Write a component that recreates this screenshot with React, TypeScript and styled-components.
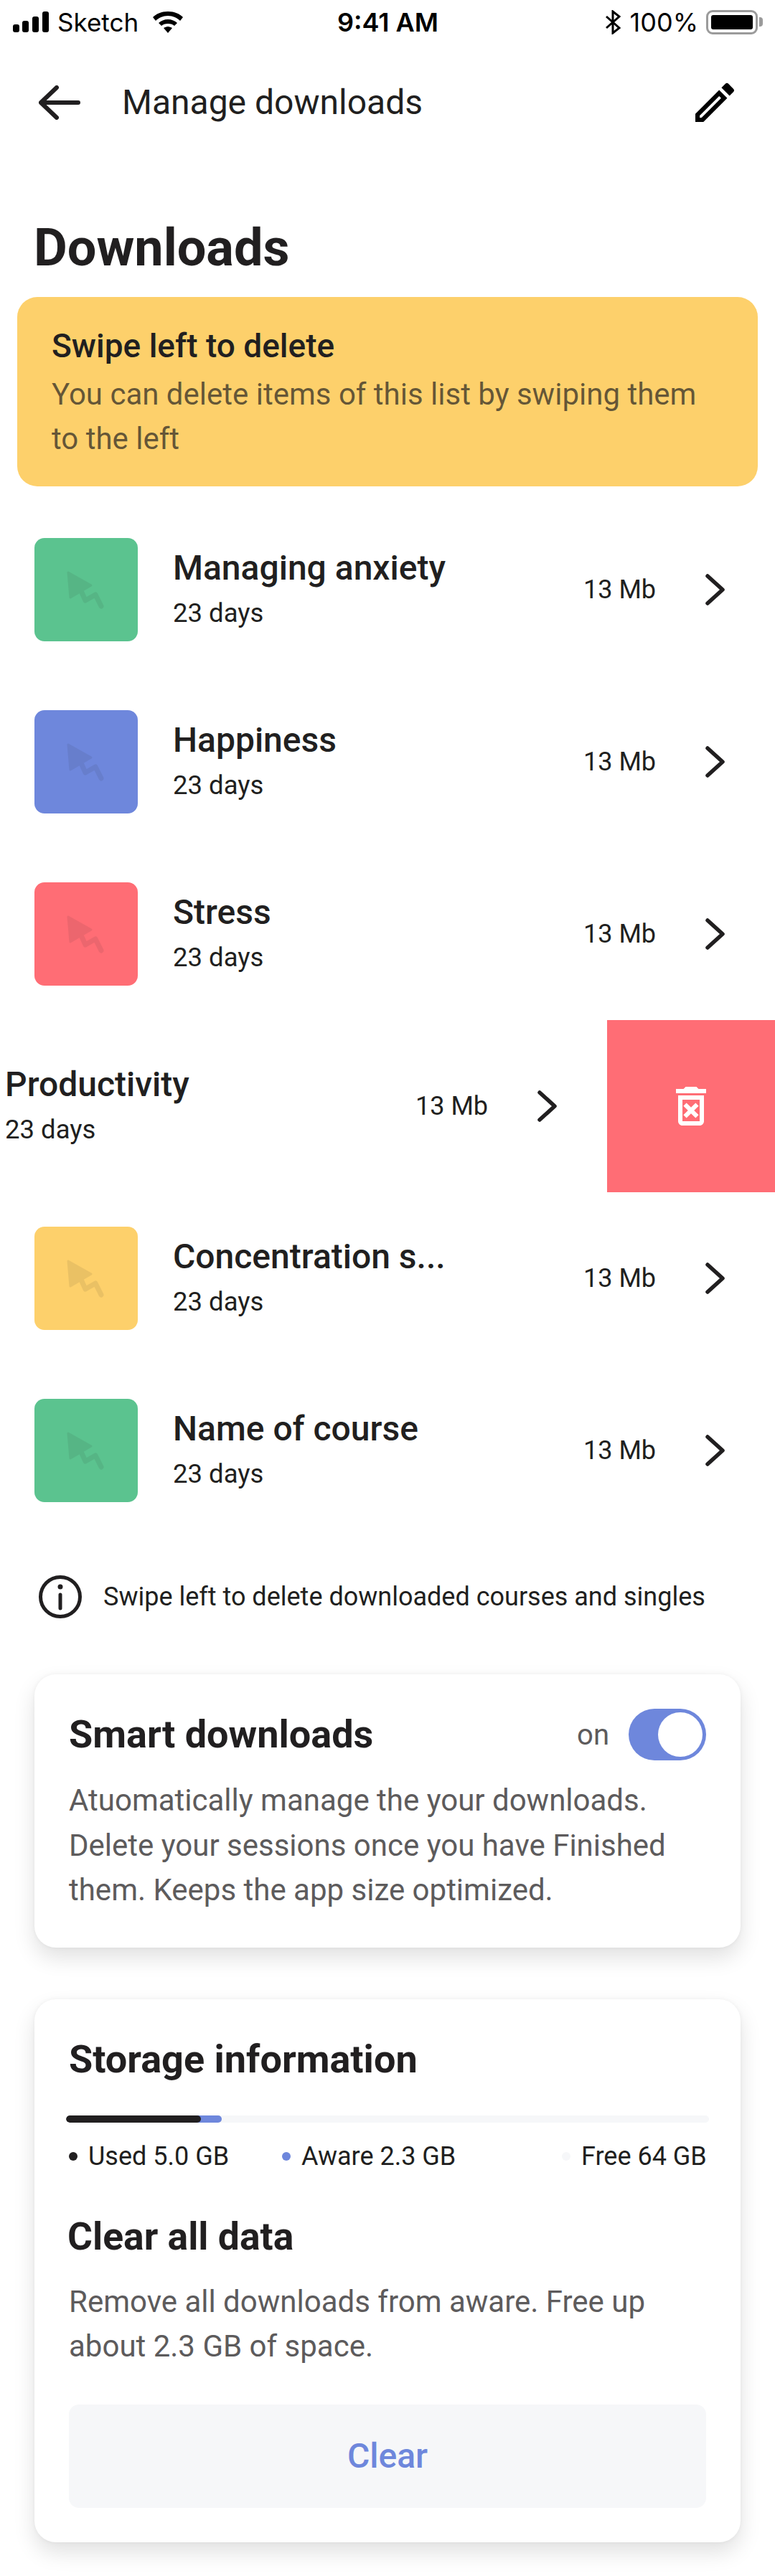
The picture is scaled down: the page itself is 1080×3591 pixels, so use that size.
import styled, { createGlobalStyle } from "styled-components";

const GlobalStyle = createGlobalStyle`
  * { box-sizing: border-box; }
  html, body { margin: 0; padding: 0; background: #fff; }
  body { font-family: "Roboto", "Liberation Sans", sans-serif; color: #211f20; }
`;

const Page = styled.div`
  width: 1080px;
  height: 3591px;
  overflow: hidden;
  background: #fff;
`;

const StatusBar = styled.div`
  height: 62px;
  padding: 0 17px 0 18px;
  display: grid;
  grid-template-columns: 1fr auto 1fr;
  align-items: center;
  font-family: "Inter", sans-serif;
  font-size: 36px;
  color: #000;
`;

const StatusLeft = styled.div`
  display: flex;
  align-items: center;
  svg { display: block; }
`;

const Carrier = styled.span`
  margin: 0 19px 0 12px;
  font-size: 35px;
`;

const Clock = styled.span`
  font-weight: 600;
`;

const StatusRight = styled.div`
  display: flex;
  align-items: center;
  justify-content: flex-end;
  svg { display: block; }
`;

const Percent = styled.span`
  margin: 0 11px 0 13px;
`;

const Battery = styled.div`
  width: 72px;
  height: 34px;
  padding: 4px;
  border: 3px solid #9b9b9b;
  border-radius: 9px;
  position: relative;
  margin-right: 7px;
  &::before {
    content: "";
    display: block;
    height: 100%;
    background: #000;
    border-radius: 3px;
  }
  &::after {
    content: "";
    position: absolute;
    right: -10px;
    top: 7px;
    width: 5px;
    height: 13px;
    background: #9b9b9b;
    border-radius: 0 4px 4px 0;
  }
`;

const Header = styled.header`
  height: 162px;
  padding: 0 48px 0 54px;
  display: flex;
  align-items: center;
  svg { display: block; }
`;

const HeaderTitle = styled.h2`
  flex: 1;
  margin: 0 0 0 58px;
  font-size: 48px;
  line-height: 60px;
  font-weight: 400;
`;

const PageTitle = styled.h1`
  margin: 80px 0 26px 47px;
  font-size: 72px;
  line-height: 84px;
  font-weight: 700;
`;

const Banner = styled.section`
  margin: 0 24px;
  height: 264px;
  padding: 38px 48px 0 48px;
  background: #fdd06b;
  border-radius: 28px;
`;

const BannerTitle = styled.h3`
  margin: 0 0 7px;
  font-size: 46px;
  line-height: 60px;
  font-weight: 500;
`;

const BannerText = styled.p`
  margin: 0;
  font-size: 42px;
  line-height: 62px;
  color: rgba(33, 31, 32, 0.7);
`;

const List = styled.div`
  margin-top: 24px;
`;

const RowWrap = styled.div`
  position: relative;
  height: 240px;
  overflow: hidden;
`;

const Row = styled.div<{ $swiped?: boolean }>`
  height: 240px;
  width: 1080px;
  padding: 0 70px 0 48px;
  margin-left: ${(p) => (p.$swiped ? "-234px" : "0")};
  display: flex;
  align-items: center;
  svg { flex: none; }
`;

const Thumb = styled.div<{ $color: string }>`
  width: 144px;
  height: 144px;
  flex: none;
  border-radius: 14px;
  background: ${(p) => p.$color};
  svg { display: block; }
`;

const RowText = styled.div`
  flex: 1;
  margin-left: 49px;
  padding-bottom: 2px;
`;

const RowTitle = styled.div`
  font-size: 48px;
  line-height: 60px;
  font-weight: 500;
`;

const RowSub = styled.div`
  margin-top: 8px;
  font-size: 36.5px;
  line-height: 50px;
`;

const RowSize = styled.div`
  width: 170px;
  font-size: 36px;
  line-height: 50px;
`;

const DeleteAction = styled.div`
  position: absolute;
  top: 0;
  right: 0;
  width: 234px;
  height: 240px;
  background: #ff6d75;
  display: flex;
  align-items: center;
  justify-content: center;
`;

const InfoRow = styled.div`
  margin: 54px 0 78px;
  padding-left: 54px;
  display: flex;
  align-items: center;
  gap: 30px;
  font-size: 36px;
  line-height: 60px;
  svg { display: block; }
`;

const Card = styled.section`
  margin: 0 48px;
  padding: 48px;
  background: #fff;
  border-radius: 30px;
  box-shadow: 0 14px 30px rgba(0, 0, 0, 0.12), 0 0 6px rgba(0, 0, 0, 0.05);
`;

const CardHead = styled.div`
  display: flex;
  align-items: center;
  height: 72px;
`;

const CardTitle = styled.h3`
  flex: 1;
  margin: 0;
  font-size: 54px;
  line-height: 72px;
  font-weight: 700;
`;

const OnLabel = styled.span`
  font-size: 40px;
  color: #5d5b5c;
  margin-right: 27px;
`;

const Toggle = styled.div`
  position: relative;
  width: 108px;
  height: 72px;
  border-radius: 36px;
  background: #6e87dc;
  &::after {
    content: "";
    position: absolute;
    top: 5px;
    right: 5px;
    width: 62px;
    height: 62px;
    border-radius: 50%;
    background: #fff;
  }
`;

const CardText = styled.p`
  margin: 25px 0 0;
  font-size: 42px;
  line-height: 62.5px;
  color: #5d5b5c;
`;

const StorageCard = styled(Card)`
  margin-top: 72px;
`;

const Bar = styled.div`
  margin: 42px -4px 0;
  height: 10px;
  border-radius: 5px;
  background: #f6f7f9;
  position: relative;
  overflow: hidden;
  display: flex;
`;

const BarPart = styled.div<{ $color: string; $width: number; $over?: boolean }>`
  width: ${(p) => p.$width}px;
  margin-left: ${(p) => (p.$over ? "-8px" : "0")};
  background: ${(p) => p.$color};
  border-radius: 5px;
  z-index: ${(p) => (p.$over ? 0 : 1)};
`;

const Legend = styled.div`
  margin-top: 22px;
  display: grid;
  grid-template-columns: 297px 390px 1fr;
  font-size: 36px;
  line-height: 50px;
  white-space: nowrap;
`;

const LegendItem = styled.div`
  display: flex;
  align-items: center;
  gap: 15px;
`;

const Dot = styled.span<{ $color: string }>`
  width: 12px;
  height: 12px;
  border-radius: 50%;
  background: ${(p) => p.$color};
`;

const SubTitle = styled.h3`
  margin: 51px 0 0 -2px;
  font-size: 53.5px;
  line-height: 72px;
  font-weight: 700;
`;

const ClearText = styled(CardText)`
  margin-top: 24px;
`;

const ClearButton = styled.button`
  display: block;
  width: 100%;
  height: 144px;
  margin-top: 49px;
  border: 0;
  border-radius: 14px;
  background: #f6f7f9;
  color: #6e87dc;
  font-family: inherit;
  font-size: 48px;
  font-weight: 500;
`;

const Chevron = () => (
  <svg width="27" height="44" viewBox="0 0 27 44" fill="none">
    <path d="M3 3 L24 22 L3 41" stroke="#211f20" strokeWidth="5.5" strokeLinecap="round" strokeLinejoin="round" />
  </svg>
);

const CourseGlyph = () => (
  <svg width="144" height="144" viewBox="0 0 144 144">
    <g opacity="0.08" fill="#211f20" stroke="#211f20" strokeLinejoin="round">
      <path d="M47 48 L79 66 L50 83 Z" strokeWidth="3" />
      <path d="M66 76 L71 87 L85 79 L93 95" fill="none" strokeWidth="7" strokeLinecap="round" />
    </g>
  </svg>
);

const courses = [
  { title: "Managing anxiety", color: "#5bc38f" },
  { title: "Happiness", color: "#6e87dc" },
  { title: "Stress", color: "#ff6d75" },
  { title: "Productivity", color: "#6e87dc", swiped: true },
  { title: "Concentration s...", color: "#fdd06b" },
  { title: "Name of course", color: "#5bc38f" },
];

const App = () => {
  return (
    <Page>
      <GlobalStyle />
      <StatusBar>
        <StatusLeft>
          <svg width="50" height="30" viewBox="0 0 50 30" fill="#000">
            <rect x="0" y="18" width="9" height="11" rx="3" />
            <rect x="13" y="13" width="9" height="16" rx="3" />
            <rect x="27" y="7" width="9" height="22" rx="3" />
            <rect x="41" y="0" width="9" height="29" rx="3" />
          </svg>
          <Carrier>Sketch</Carrier>
          <svg width="44" height="30" viewBox="0 0 44 30" fill="#000">
            <path d="M22 0 C31 0 38 3 43 8 L39 13 C35 9 29 6 22 6 C15 6 9 9 5 13 L1 8 C6 3 13 0 22 0 Z" />
            <path d="M22 11 C27 11 32 13 35 16 L31 20 C29 18 26 17 22 17 C18 17 15 18 13 20 L9 16 C12 13 17 11 22 11 Z" />
            <path d="M22 21 C24 21 26 22 28 23 L22 30 L16 23 C18 22 20 21 22 21 Z" />
          </svg>
        </StatusLeft>
        <Clock>9:41 AM</Clock>
        <StatusRight>
          <svg width="22" height="34" viewBox="0 0 22 34" fill="none" stroke="#000" strokeWidth="3">
            <path d="M2 9 L20 25 L11 32 V2 L20 9 L2 25" />
          </svg>
          <Percent>100%</Percent>
          <Battery />
        </StatusRight>
      </StatusBar>

      <Header>
        <svg width="58" height="48" viewBox="0 0 58 48" fill="none" stroke="#211f20" strokeWidth="6" strokeLinecap="round" strokeLinejoin="round">
          <path d="M55 24 H3 M25 3 L3 24 L25 45" />
        </svg>
        <HeaderTitle>Manage downloads</HeaderTitle>
        <svg width="72" height="72" viewBox="0 0 24 24" fill="#000">
          <path d="M3 17.25V21h3.75L17.81 9.94l-3.75-3.75L3 17.25zM5.92 19H5v-.92l9.06-9.06.92.92L5.92 19zM20.71 7.04c.39-.39.39-1.02 0-1.41l-2.34-2.34a1.003 1.003 0 0 0-1.41 0l-1.83 1.83 3.75 3.75 1.83-1.83z" />
        </svg>
      </Header>

      <PageTitle>Downloads</PageTitle>

      <Banner>
        <BannerTitle>Swipe left to delete</BannerTitle>
        <BannerText>You can delete items of this list by swiping them to the left</BannerText>
      </Banner>

      <List>
        {courses.map((c) => (
          <RowWrap key={c.title}>
            <Row $swiped={c.swiped}>
              <Thumb $color={c.color}>
                <CourseGlyph />
              </Thumb>
              <RowText>
                <RowTitle>{c.title}</RowTitle>
                <RowSub>23 days</RowSub>
              </RowText>
              <RowSize>13 Mb</RowSize>
              <Chevron />
            </Row>
            {c.swiped && (
              <DeleteAction>
                <svg width="72" height="72" viewBox="0 0 24 24" fill="#fff">
                  <path d="M14.12 10.47 12 12.59l-2.13-2.12-1.41 1.41L10.59 14l-2.12 2.12 1.41 1.41L12 15.41l2.12 2.12 1.41-1.41L13.41 14l2.12-2.12zM15.5 4l-1-1h-5l-1 1H5v2h14V4zM6 19c0 1.1.9 2 2 2h8c1.1 0 2-.9 2-2V7H6v12zM8 9h8v10H8V9z" />
                </svg>
              </DeleteAction>
            )}
          </RowWrap>
        ))}
      </List>

      <InfoRow>
        <svg width="60" height="60" viewBox="0 0 60 60" fill="none" stroke="#211f20">
          <circle cx="30" cy="30" r="27.5" strokeWidth="5" />
          <path d="M30 27 V46" strokeWidth="5" strokeLinecap="round" />
          <circle cx="30" cy="16" r="3.5" fill="#211f20" stroke="none" />
        </svg>
        Swipe left to delete downloaded courses and singles
      </InfoRow>

      <Card>
        <CardHead>
          <CardTitle>Smart downloads</CardTitle>
          <OnLabel>on</OnLabel>
          <Toggle />
        </CardHead>
        <CardText>
          Atuomatically manage the your downloads. Delete your sessions once you have Finished them. Keeps the app size optimized.
        </CardText>
      </Card>

      <StorageCard>
        <CardTitle>Storage information</CardTitle>
        <Bar>
          <BarPart $color="#211f20" $width={188} />
          <BarPart $color="#6e87dc" $width={37} $over />
        </Bar>
        <Legend>
          <LegendItem><Dot $color="#211f20" />Used 5.0 GB</LegendItem>
          <LegendItem><Dot $color="#6e87dc" />Aware 2.3 GB</LegendItem>
          <LegendItem><Dot $color="#f6f7f9" />Free 64 GB</LegendItem>
        </Legend>
        <SubTitle>Clear all data</SubTitle>
        <ClearText>Remove all downloads from aware. Free up about 2.3 GB of space.</ClearText>
        <ClearButton>Clear</ClearButton>
      </StorageCard>
    </Page>
  );
};

export default App;
